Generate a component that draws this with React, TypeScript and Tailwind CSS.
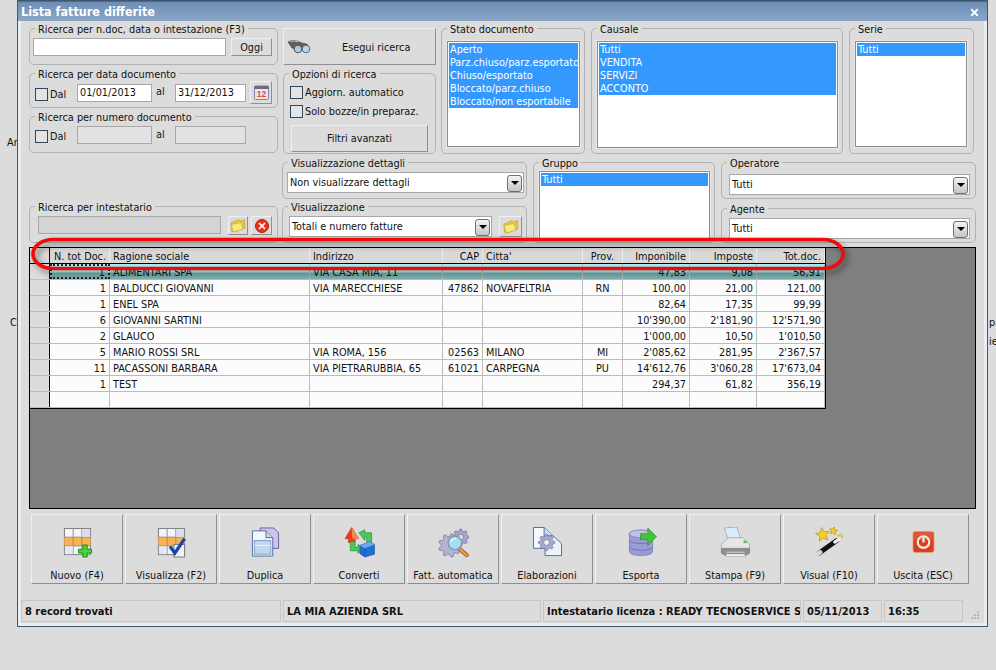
import type { ReactNode } from "react";
import { X } from "lucide-react";

const raised = "border border-t-[#f0f0f0] border-l-[#f0f0f0] border-r-[#8f8f8f] border-b-[#8f8f8f] bg-[#dcdcdc]";
const field = "border border-[#a8a8a8] px-[2px] pt-[1px] flex items-center leading-none";

const gear = (cx: number, cy: number, r: number, n = 8) => {
  const pts: string[] = [];
  for (let i = 0; i < n * 4; i++) {
    const rad = i % 4 < 2 ? r : r * 0.76;
    const a = ((i - 0.5) * Math.PI * 2) / (n * 4);
    pts.push(`${(cx + rad * Math.cos(a)).toFixed(2)} ${(cy + rad * Math.sin(a)).toFixed(2)}`);
  }
  return "M" + pts.join("L") + "Z";
};

const star = (cx: number, cy: number, r: number, rot = 0) => {
  const pts: string[] = [];
  for (let i = 0; i < 10; i++) {
    const rad = i % 2 ? r * 0.45 : r;
    const a = rot + (i * Math.PI) / 5 - Math.PI / 2;
    pts.push(`${(cx + rad * Math.cos(a)).toFixed(2)} ${(cy + rad * Math.sin(a)).toFixed(2)}`);
  }
  return "M" + pts.join("L") + "Z";
};

function Group({ title, className, children }: { title: string; className: string; children?: ReactNode }) {
  return (
    <fieldset className={`border border-[#b2b2b2] rounded-[5px] min-w-0 shrink-0 ${className}`}>
      <legend className="ml-[5px] px-[3px] h-[13px] leading-[15px] whitespace-nowrap">{title}</legend>
      {children}
    </fieldset>
  );
}

function Check({ label, className = "" }: { label: string; className?: string }) {
  return (
    <div className={`flex items-center h-[13px] leading-[13px] ${className}`}>
      <span className="w-[13px] h-[13px] border border-[#33475c] bg-[#e4e4e4] shrink-0" />
      <span className="ml-[2px] whitespace-nowrap">{label}</span>
    </div>
  );
}

function ListBox({ items, className }: { items: string[]; className: string }) {
  return (
    <div className={`border border-[#8c8c8c] bg-white p-[1px] outline outline-1 outline-[#e8e8e8] overflow-hidden ${className}`}>
      {items.map((t) => (
        <div key={t} className="h-[13px] leading-[13px] bg-[#3399ff] text-white pl-[1px] whitespace-nowrap overflow-hidden">{t}</div>
      ))}
    </div>
  );
}

function Select({ value, className }: { value: string; className: string }) {
  return (
    <div className={`${field} bg-white justify-between pr-[1px] pt-0 ${className}`}>
      <span className="pt-[1px]">{value}</span>
      <span className="w-[15px] h-[17px] rounded-[3px] border border-[#6f6f6f] bg-[linear-gradient(#f4f4f4,#c4c4cc)] flex items-center justify-center">
        <span className="w-0 h-0 border-x-[4px] border-x-transparent border-t-[4px] border-t-black" />
      </span>
    </div>
  );
}

function Folder() {
  return (
    <svg width="16" height="15" viewBox="0 0 16 15">
      <path d="M1 5 L9 1.5 L10.5 3 L14.5 1.5 L15 10 L4 14 L1.5 13Z" fill="#e8c642" stroke="#b59a25" strokeWidth="0.6" />
      <path d="M1 6.5 L11 4.5 L13 11 L3.5 14 Z" fill="#fbe97a" stroke="#c4a72c" strokeWidth="0.6" />
    </svg>
  );
}

function Binoculars() {
  return (
    <svg width="24" height="16" viewBox="0 0 24 16">
      <path d="M1 3 Q5 0 10 2 L15 4 L20 5 L22 9 L15 9 L11 11 L5 9Z" fill="#5f5f5f" stroke="#444" strokeWidth="0.6" />
      <path d="M3 2.5 Q7 1 11 3" stroke="#c8c8c8" fill="none" />
      <circle cx="11" cy="10" r="3.8" fill="#a8cdea" stroke="#555" />
      <circle cx="19" cy="10" r="3.8" fill="#bcd8ef" stroke="#666" />
    </svg>
  );
}

function Calendar() {
  return (
    <svg width="15" height="15" viewBox="0 0 15 15">
      <rect x="0.5" y="1" width="14" height="13.5" rx="1" fill="#e9e4f4" stroke="#8c7fb5" />
      <rect x="0.5" y="1" width="14" height="3" fill="#6c6c78" />
      <text x="7.5" y="12" textAnchor="middle" fontSize="8.5" fontWeight="700" fill="#e4501c" fontFamily="Liberation Sans, sans-serif">12</text>
    </svg>
  );
}

function GridBase() {
  return (
    <>
      <rect x="3" y="1.5" width="27" height="27" fill="#f4f4fb" stroke="#7c7c7c" />
      <rect x="3" y="10.5" width="27" height="9" fill="#fbb24c" />
      <path d="M12 1.5V28.5M21 1.5V28.5M3 10.5H30M3 19.5H30" stroke="#8f8f8f" />
      <rect x="21.5" y="2" width="8" height="8" fill="#dcdcf2" />
      <rect x="21.5" y="20" width="8" height="8" fill="#dcdcf2" />
      <rect x="3.5" y="20" width="8" height="8" fill="#e6e6f6" />
    </>
  );
}

const icons: Record<string, ReactNode> = {
  nuovo: (
    <>
      <GridBase />
      <path d="M22 19.5h4.5V24H31v3.8h-4.5V32H22v-4.2h-4.5V24H22Z" transform="translate(0,-1)" fill="#4fd13a" stroke="#1d8a1d" />
    </>
  ),
  visualizza: (
    <>
      <GridBase />
      <rect x="19" y="18" width="11" height="13" fill="#f2f2f2" stroke="#777" />
      <path d="M15 20 L20 27 L30 12" fill="none" stroke="#1446ad" strokeWidth="3.4" />
    </>
  ),
  duplica: (
    <>
      <path d="M11 1H25L30 6V22H11Z" fill="#cdc4ea" stroke="#6a5aa5" />
      <path d="M3 4H17L24 11V30H3Z" fill="#f1f6fc" stroke="#4f6da5" />
      <path d="M17 4V11H24" fill="#c7d9ef" stroke="#4f6da5" />
      <rect x="5" y="14" width="17" height="14" fill="#c3d6ed" stroke="#7f9dc8" />
      <path d="M5 19H22" stroke="#f1f6fc" />
    </>
  ),
  converti: (
    <>
      <path d="M8.5 0.5L15.5 12H12V16H5V12H1.5Z" fill="#ef3d1a" stroke="#c22a10" strokeWidth="0.6" />
      <path d="M8.5 0.5L15.5 12H9Z" fill="#f88a4a" />
      <path d="M16 6L22 3V6H29V16H24V10.5H22L22 14Z" fill="#4cc95a" stroke="#1f8a35" strokeWidth="0.7" />
      <path d="M7 15H12V21H15V18L21 22.5L15 27V24.5H7Z" fill="#4cc95a" stroke="#1f8a35" strokeWidth="0.7" />
      <path d="M17 19L27 15L32 18V28L22 31L17 27.5Z" fill="#1f6fd6" stroke="#124a9c" strokeWidth="0.6" />
      <path d="M17 19L22 22L32 18L27 15Z" fill="#6ba9ee" />
      <path d="M22 22V31" stroke="#124a9c" strokeWidth="0.6" />
    </>
  ),
  automatica: (
    <>
      <path d={gear(24, 10.5, 8.5)} fill="#a6a6cb" stroke="#6b6b95" strokeWidth="0.7" />
      <circle cx="24" cy="10.5" r="3" fill="#dcdcdc" stroke="#6b6b95" strokeWidth="0.7" />
      <path d={gear(13, 19, 12, 9)} fill="#b3b3d4" stroke="#6b6b95" strokeWidth="0.7" />
      <path d="M22 22L30 29" stroke="#8a5a20" strokeWidth="4.2" strokeLinecap="round" />
      <path d="M22 22L30 29" stroke="#f29a3c" strokeWidth="2.6" strokeLinecap="round" />
      <circle cx="18" cy="16.5" r="7" fill="#a5dcf2" stroke="#7d8db0" strokeWidth="1.2" />
      <path d="M14 15Q15 12 19 12" stroke="#e9f8ff" strokeWidth="1.5" fill="none" />
    </>
  ),
  elaborazioni: (
    <>
      <path d="M2 0.5H13L23 10V22H2Z" fill="#f4f8fd" stroke="#4f6da5" />
      <path d="M13 0.5V10H23" fill="#c9ddf2" stroke="#4f6da5" />
      <path d="M14 9H22L31 17V29.5H14Z" fill="#eaf2fb" stroke="#4f6da5" />
      <path d={gear(15.5, 16, 8.5)} fill="#a9a9cb" stroke="#6b6b95" strokeWidth="0.7" />
      <circle cx="15.5" cy="16" r="3" fill="#eef2f8" stroke="#6b6b95" strokeWidth="0.7" />
    </>
  ),
  esporta: (
    <>
      <path d="M4 7C4 2 28 2 28 7V25C28 31 4 31 4 25Z" fill="#9a9cd8" stroke="#7173b0" strokeWidth="0.7" />
      <ellipse cx="16" cy="7" rx="12" ry="4" fill="#c0c1ea" stroke="#7173b0" strokeWidth="0.6" />
      <path d="M4 14C7 18 25 18 28 14M4 21C7 25 25 25 28 21" fill="none" stroke="#7173b0" />
      <path d="M15.5 7H23V1L32 10L23 19V13H15.5Z" fill="#43c43c" stroke="#23902a" strokeWidth="0.7" />
    </>
  ),
  stampa: (
    <>
      <path d="M5 1L18 0L22 13H9Z" fill="#d9ecfb" stroke="#8e9eac" strokeWidth="0.7" />
      <path d="M2 18L9 11H24L31 18V25H2Z" fill="#e6e6e6" stroke="#9a9a9a" strokeWidth="0.7" />
      <path d="M2 22H31V27L26 30H7L2 27Z" fill="#8e8e8e" stroke="#7a7a7a" strokeWidth="0.6" />
      <path d="M7 26H26" stroke="#d8d8d8" />
      <rect x="7" y="28" width="19" height="2" fill="#f2f2f2" />
      <ellipse cx="26.5" cy="15.5" rx="2" ry="1.2" fill="#49c24a" />
    </>
  ),
  visual: (
    <>
      <path d={star(9.5, 8, 7.5, -0.15)} fill="#f6cf2f" stroke="#b98a12" strokeWidth="0.7" />
      <path d={star(20.5, 4, 4.5, 0.2)} fill="#f6cf2f" stroke="#b98a12" strokeWidth="0.7" />
      <path d={star(27.5, 10, 3.2, 0.2)} fill="#f6d75a" stroke="#b98a12" strokeWidth="0.5" />
      <path d="M5.5 27L24 14" stroke="#111" strokeWidth="5" strokeLinecap="round" />
      <path d="M4 28L7 26" stroke="#d8d8d8" strokeWidth="4.5" strokeLinecap="round" />
      <path d="M22 15.5L27 12" stroke="#eee" strokeWidth="3.5" strokeLinecap="round" />
    </>
  ),
  uscita: (
    <>
      <rect x="5.5" y="4.5" width="22" height="22" rx="2.5" fill="#d8401c" stroke="#f4c2b0" strokeWidth="0.7" />
      <rect x="6" y="5" width="21" height="9" rx="2" fill="#e8654a" opacity="0.6" />
      <circle cx="16.5" cy="15.5" r="6" fill="none" stroke="#f6e9e4" strokeWidth="2.2" />
      <path d="M16.5 10.5V16" stroke="#f6e9e4" strokeWidth="2.4" />
    </>
  ),
};

const actions = [
  ["Nuovo (F4)", "nuovo"],
  ["Visualizza (F2)", "visualizza"],
  ["Duplica", "duplica"],
  ["Converti", "converti"],
  ["Fatt. automatica", "automatica"],
  ["Elaborazioni", "elaborazioni"],
  ["Esporta", "esporta"],
  ["Stampa (F9)", "stampa"],
  ["Visual (F10)", "visual"],
  ["Uscita (ESC)", "uscita"],
];

const columns = [
  { w: "w-[60px]", a: "text-right pr-[3px]", label: "N. tot Doc." },
  { w: "w-[200px]", a: "text-left pl-[3px]", label: "Ragione sociale" },
  { w: "w-[133px]", a: "text-left pl-[3px]", label: "Indirizzo" },
  { w: "w-[40px]", a: "text-right pr-[3px]", label: "CAP" },
  { w: "w-[100px]", a: "text-left pl-[3px]", label: "Citta'" },
  { w: "w-[40px]", a: "text-center", label: "Prov." },
  { w: "w-[67px]", a: "text-right pr-[3px]", label: "Imponibile" },
  { w: "w-[67px]", a: "text-right pr-[3px]", label: "Imposte" },
  { w: "w-[68px]", a: "text-right pr-[3px]", label: "Tot.doc." },
];

const rows = [
  ["1", "ALIMENTARI SPA", "VIA CASA MIA, 11", "", "", "", "47,83", "9,08", "56,91"],
  ["1", "BALDUCCI GIOVANNI", "VIA MARECCHIESE", "47862", "NOVAFELTRIA", "RN", "100,00", "21,00", "121,00"],
  ["1", "ENEL SPA", "", "", "", "", "82,64", "17,35", "99,99"],
  ["6", "GIOVANNI SARTINI", "", "", "", "", "10'390,00", "2'181,90", "12'571,90"],
  ["2", "GLAUCO", "", "", "", "", "1'000,00", "10,50", "1'010,50"],
  ["5", "MARIO ROSSI SRL", "VIA ROMA, 156", "02563", "MILANO", "MI", "2'085,62", "281,95", "2'367,57"],
  ["11", "PACASSONI BARBARA", "VIA PIETRARUBBIA, 65", "61021", "CARPEGNA", "PU", "14'612,76", "3'060,28", "17'673,04"],
  ["1", "TEST", "", "", "", "", "294,37", "61,82", "356,19"],
  ["", "", "", "", "", "", "", "", ""],
];

const status = [
  ["w-[260px]", "8 record trovati"],
  ["w-[258px]", "LA MIA AZIENDA SRL"],
  ["w-[258px]", "Intestatario licenza : READY TECNOSERVICE S"],
  ["w-[79px]", "05/11/2013"],
  ["w-[79px]", "16:35"],
];

export default function App() {
  return (
    <div className="relative w-[996px] h-[670px] overflow-hidden flex bg-[#dcdcdc] text-[#111] text-[10.8px] font-['DejaVu_Sans_Condensed','Liberation_Sans',sans-serif]">
      <div className="w-[17px] shrink-0 overflow-hidden pl-[7px] whitespace-nowrap">
        <div className="pt-[135px]">Ar</div>
        <div className="pt-[164px] pl-[3px]">C</div>
      </div>

      <div className="w-[971px] h-[627px] shrink-0 border border-[#40566e] bg-[#e8edf2] flex flex-col">
        <div className="h-[20px] shrink-0 bg-[linear-gradient(#6d8fb6,#8ba6c6)] border-t border-t-[#4d6c91] flex items-center justify-between pl-[3px] pr-[7px] pt-[2px]">
          <span className="font-bold text-[12.5px] text-white">Lista fatture differite</span>
          <X size={11} strokeWidth={4} className="text-white" />
        </div>

        <div className="mx-[3px] h-[602px] bg-[#dcdcdc] flex flex-col pt-[1px]">
          <div className="flex pl-[8px]">
            <div className="w-[249px] flex flex-col gap-[2px] shrink-0">
              <Group title="Ricerca per n.doc, data o intestazione (F3)" className="h-[43px]">
                <div className="flex mt-[3px] ml-[3px] gap-[5px]">
                  <div className={`${field} bg-white w-[193px] h-[18px]`} />
                  <div className={`${raised} w-[41px] h-[18px] pt-[2px] flex items-center justify-center`}>Oggi</div>
                </div>
              </Group>
              <Group title="Ricerca per data documento" className="h-[41px]">
                <div className="flex items-center ml-[5px] mt-[1px] h-[23px]">
                  <Check label="Dal" className="w-[42px] mt-[3px]" />
                  <div className={`${field} bg-white w-[75px] h-[18px]`}>01/01/2013</div>
                  <span className="w-[23px] pl-[4px]">al</span>
                  <div className={`${field} bg-white w-[71px] h-[18px]`}>31/12/2013</div>
                  <div className={`${raised} ml-[4px] w-[22px] h-[23px] flex items-center justify-center`}>
                    <Calendar />
                  </div>
                </div>
              </Group>
              <Group title="Ricerca per numero documento" className="h-[43px]">
                <div className="flex items-center ml-[5px] mt-[3px]">
                  <Check label="Dal" className="w-[42px] mt-[3px]" />
                  <div className={`${field} bg-[#e2e2e2] w-[75px] h-[18px]`} />
                  <span className="w-[23px] pl-[4px]">al</span>
                  <div className={`${field} bg-[#e2e2e2] w-[71px] h-[18px]`} />
                </div>
              </Group>
            </div>

            <div className="w-[153px] ml-[5px] flex flex-col gap-[2px] shrink-0">
              <div className={`${raised} mt-[6px] h-[37px] flex items-center pl-[3px]`}>
                <Binoculars />
                <span className="ml-[31px] mt-[3px]">Esegui ricerca</span>
              </div>
              <Group title="Opzioni di ricerca" className="h-[87px]">
                <Check label="Aggiorn. automatico" className="ml-[6px] mt-[6px]" />
                <Check label="Solo bozze/in preparaz." className="ml-[6px] mt-[6px]" />
                <div className={`${raised} ml-[7px] mt-[7px] w-[137px] h-[27px] pt-[1px] flex items-center justify-center`}>Filtri avanzati</div>
              </Group>
            </div>

            <Group title="Stato documento" className="ml-[5px] w-[144px] h-[132px]">
              <ListBox className="ml-[5px] mt-[6px] w-[133px] h-[106px]" items={["Aperto", "Parz.chiuso/parz.esportato", "Chiuso/esportato", "Bloccato/parz.chiuso", "Bloccato/non esportabile"]} />
            </Group>
            <Group title="Causale" className="ml-[6px] w-[252px] h-[132px]">
              <ListBox className="ml-[5px] mt-[6px] w-[241px] h-[107px]" items={["Tutti", "VENDITA", "SERVIZI", "ACCONTO"]} />
            </Group>
            <Group title="Serie" className="ml-[6px] w-[125px] h-[132px]">
              <ListBox className="ml-[5px] mt-[6px] w-[112px] h-[106px]" items={["Tutti"]} />
            </Group>
          </div>

          <div className="flex pl-[8px] mt-[2px] h-[87px]">
            <div className="w-[249px] flex flex-col justify-end shrink-0">
              <Group title="Ricerca per intestatario" className="h-[43px]">
                <div className="flex mt-[3px] ml-[8px]">
                  <div className={`${field} bg-[#d4d4d4] w-[183px] h-[18px]`} />
                  <div className={`${raised} ml-[7px] w-[20px] h-[19px] flex items-center justify-center`}><Folder /></div>
                  <div className={`${raised} ml-[3px] w-[21px] h-[19px] flex items-center justify-center`}>
                    <span className="w-[14px] h-[14px] rounded-full bg-[#e8321e] border border-[#b5200f] flex items-center justify-center">
                      <X size={10} strokeWidth={4} className="text-white" />
                    </span>
                  </div>
                </div>
              </Group>
            </div>

            <div className="w-[245px] ml-[4px] flex flex-col gap-[1px] shrink-0">
              <Group title="Visualizzazione dettagli" className="h-[43px]">
                <Select value="Non visualizzare dettagli" className="ml-[4px] mt-[3px] w-[237px] h-[21px]" />
              </Group>
              <Group title="Visualizzazione" className="h-[43px]">
                <div className="flex ml-[6px] mt-[3px]">
                  <Select value="Totali e numero fatture" className="w-[203px] h-[21px]" />
                  <div className={`${raised} ml-[7px] w-[23px] h-[21px] flex items-center justify-center`}><Folder /></div>
                </div>
              </Group>
            </div>

            <Group title="Gruppo" className="ml-[6px] w-[182px] h-[87px]">
              <ListBox className="ml-[5px] mt-[2px] w-[171px] h-[69px]" items={["Tutti"]} />
            </Group>

            <div className="w-[255px] ml-[6px] flex flex-col gap-[3px] shrink-0">
              <Group title="Operatore" className="h-[43px]">
                <Select value="Tutti" className="ml-[7px] mt-[5px] w-[241px] h-[21px]" />
              </Group>
              <Group title="Agente" className="h-[41px]">
                <Select value="Tutti" className="ml-[7px] mt-[3px] w-[241px] h-[21px]" />
              </Group>
            </div>
          </div>

          <div className="ml-[8px] mt-[4px] w-[947px] h-[262px] shrink-0 border border-black bg-[#7f7f7f]">
            <div className="w-[796px] border-r border-b border-black bg-white">
              <div className="flex h-[16px] bg-[#d8d8d8] border-b border-black">
                <div className="w-[20px] border-r border-black" />
                {columns.map((c) => (
                  <div key={c.label} className={`${c.w} ${c.a} border-r border-[#ececec] leading-[17px] whitespace-nowrap`}>{c.label}</div>
                ))}
              </div>
              {rows.map((row, i) => (
                <div key={i} className={`flex h-[16px] border-b border-[#bcbcbc] ${i === 0 ? "bg-[linear-gradient(#a9f0f3_0,#a9f0f3_8px,#7fb2b2_9px)]" : "bg-[#fcfcfc]"}`}>
                  <div className="w-[20px] border-r border-black bg-[#dcdcdc]" />
                  {row.map((v, j) => (
                    <div key={j} className={`${columns[j].w} ${columns[j].a} whitespace-nowrap ${i === 0 && j === 0 ? "border-2 border-dotted border-[#222] leading-[13px]" : "border-r border-[#bcbcbc] leading-[17px]"}`}>{v}</div>
                  ))}
                </div>
              ))}
            </div>
          </div>

          <div className="flex gap-[2px] ml-[10px] mt-[5px]">
            {actions.map(([label, key]) => (
              <div key={key} className={`${raised} w-[92px] h-[70px] flex flex-col items-center pt-[12px]`}>
                <svg width="32" height="32" viewBox="0 0 32 32">{icons[key]}</svg>
                <span className="mt-[11px] whitespace-nowrap leading-[14px]">{label}</span>
              </div>
            ))}
          </div>

          <div className="flex gap-[2px] mt-[16px] items-center">
            {status.map(([w, t]) => (
              <div key={t} className={`${w} h-[22px] shrink-0 border border-[#c6c6c6] pl-[3px] overflow-hidden whitespace-nowrap font-bold text-[11px] leading-[22px]`}>{t}</div>
            ))}
            <svg width="10" height="10" viewBox="0 0 10 10" className="ml-[5px] mt-[7px]">
              <path d="M7 1h2v2H7zM4 4h2v2H4zM7 4h2v2H7zM1 7h2v2H1zM4 7h2v2H4zM7 7h2v2H7z" fill="#b8b8b8" />
            </svg>
          </div>
        </div>
      </div>

      <div className="flex-1 overflow-hidden whitespace-nowrap pt-[315px] pl-[1px]">
        <div>p</div>
        <div className="pt-[3px]">ie</div>
      </div>

      <svg className="absolute left-0 top-0 pointer-events-none drop-shadow-[3px_4px_3px_rgba(0,0,0,0.45)]" width="996" height="670" viewBox="0 0 996 670">
        <rect x="33" y="239.5" width="810" height="29" rx="20" ry="14.5" fill="none" stroke="#f20a0a" strokeWidth="3.6" />
      </svg>
    </div>
  );
}
